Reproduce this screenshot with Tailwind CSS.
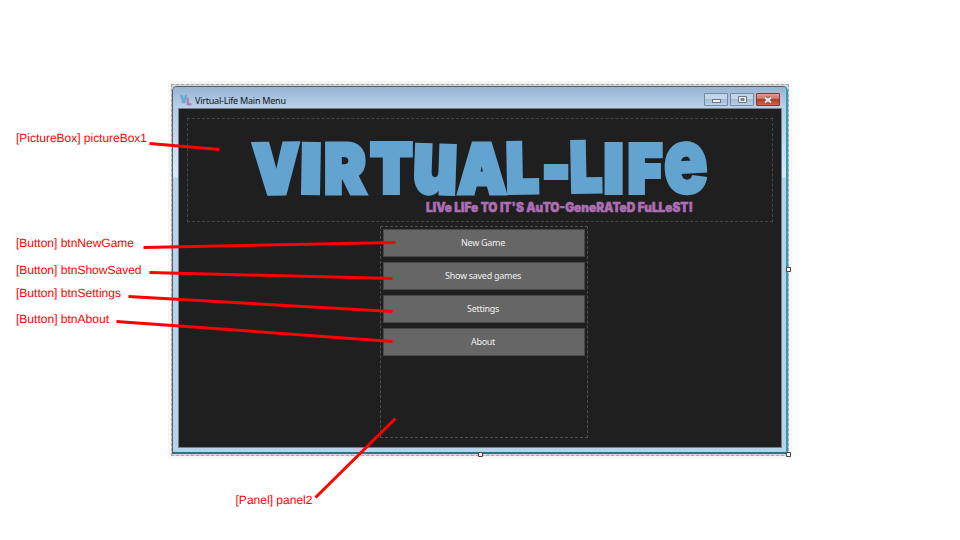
<!DOCTYPE html>
<html lang="en">
<head>
<meta charset="utf-8">
<title>Virtual-Life Main Menu</title>
<script src="https://cdn.jsdelivr.net/npm/@tailwindcss/browser@4"></script>
</head>
<body class="bg-white">
<main class="relative w-[960px] h-[540px] overflow-hidden bg-white">

  <!-- Designer surface around the form -->
  <div class="absolute left-[168px] top-[81px] w-[624px] h-[378px] bg-[#f6f6f6] p-[3px]">
    <div class="w-[618px] h-[372px] border border-dashed border-[#aaa] bg-[#d5d5d5] pt-px pb-px">
      <section class="w-[616px] h-[368px] flex flex-col rounded-t-[5px] border border-[#54616e] border-b-2 border-b-[#257783] border-r-2 border-r-[#2c9db9] bg-[linear-gradient(#9fbad7_0,#b4cce6_22px,#dce8f5_90px,#b9d1ea_91px)] px-[5px] pb-[4px]">
        <header class="h-[21px] flex items-center justify-between bg-[linear-gradient(#98b4d2,#bad1e9)] -mx-[5px] px-[6px] rounded-t-[4px] shrink-0">
          <div class="flex items-center gap-[2px] pl-[1px] pt-[5px]">
            <svg width="13" height="12" viewBox="0 0 13 12" font-family="Inter, sans-serif" font-weight="900"><text x="0" y="9" font-size="10" fill="#62a8d5" stroke="#62a8d5" stroke-width=".4" textLength="7" lengthAdjust="spacingAndGlyphs">V</text><text x="6.500" y="11" font-size="9" fill="#b277b8" stroke="#b277b8" stroke-width=".4" textLength="5" lengthAdjust="spacingAndGlyphs">L</text></svg>
            <svg width="94" height="14" viewBox="0 0 94 14"><text x="0" y="10.500" font-family="Noto Sans, sans-serif" font-size="9" fill="#10151c" textLength="91">Virtual-Life Main Menu</text></svg>
          </div>
          <div class="flex gap-[2px] pt-[4px]">
            <div class="w-[24px] h-[13px] rounded-[1px] border border-[#7489a1] bg-[linear-gradient(#c3d5e8_45%,#a4bcd6_50%,#b9d2eb)] flex items-center justify-center"><span class="w-[9px] h-[4px] mt-[2px] border border-[#6c7684] bg-[#eee]"></span></div>
            <div class="w-[24px] h-[13px] rounded-[1px] border border-[#7489a1] bg-[linear-gradient(#c3d5e8_45%,#a4bcd6_50%,#b9d2eb)] flex items-center justify-center"><svg width="9" height="7"><path d="M.5.5h8v6h-8z" fill="#f1f1f1" stroke="#6c7684"/><path d="M3 2.500h3v2H3z" fill="#8299b4" stroke="#6c7684"/></svg></div>
            <div class="w-[24px] h-[13px] rounded-[1px] border border-[#7c3c3b] bg-[linear-gradient(#dda092,#d0705d_45%,#b83b25_50%,#ce6448)] flex items-center justify-center"><svg width="10" height="8"><path d="M2 1.500l6 5m0-5l-6 5" stroke="#685b62" stroke-width="3.600"/><path d="M2 1.500l6 5m0-5l-6 5" stroke="#f5f0ee" stroke-width="1.800"/></svg></div>
          </div>
        </header>
        <div class="w-[604px] flex-1 min-h-0 flex flex-col bg-[#1f1f1f] border border-[#737f8d] px-[8px] pt-[9px]">
          <div class="w-[586px] h-[104px] shrink-0 border border-dashed border-[#484848]">
            <svg class="overflow-visible" width="583" height="102" viewBox="188 119 583 102" font-family="Inter, sans-serif" font-weight="900">
              <g fill="#62a3d0" stroke="#62a3d0" stroke-width="6" stroke-linejoin="miter" stroke-miterlimit="3">
                <text transform="translate(254 193) rotate(-1) scale(.86 1)" font-size="66">V</text>
                <text transform="translate(301 192) rotate(1) scale(1.01 1)" font-size="65">I</text>
                <text transform="translate(324.500 193) scale(.92 1)" font-size="67" stroke-width="5">R</text>
                <text transform="translate(371 192) scale(.9 1)" font-size="66">T</text>
                <text transform="translate(412 192) rotate(2) scale(.8 1)" font-size="86" stroke-width="5">u</text>
                <text transform="translate(458 193) scale(.9 1)" font-size="67" stroke-width="5">A</text>
                <text transform="translate(507 192) rotate(-1) scale(.84 1)" font-size="66">L</text>
                <text transform="translate(542.500 192) scale(.84 1)" font-size="68">-</text>
                <text transform="translate(571 191) rotate(-1) scale(.82 1)" font-size="66">L</text>
                <text transform="translate(604.500 192) scale(.96 1)" font-size="65">I</text>
                <text transform="translate(628.500 192) scale(.87 1)" font-size="65">F</text>
                <text transform="translate(665 194) rotate(-3) scale(.8 1)" font-size="91" stroke-width="3">e</text>
              </g>
              <text x="426" y="211.500" font-size="12.500" fill="#ae6db6" stroke="#ae6db6" stroke-width=".5" textLength="267" lengthAdjust="spacingAndGlyphs">LIVe LIFe TO IT'S AuTO-GeneRATeD FuLLeST!</text>
            </svg>
          </div>
          <div class="mt-[4px] ml-[193px] w-[208px] h-[212px] shrink-0 border border-dashed border-[#505050] px-[2px] pt-[2px] flex flex-col gap-[5px] font-['Noto_Sans',sans-serif] text-[9px] tracking-[-0.28px] text-[#eee]">
            <button class="h-[28px] border border-[#484848] bg-[#666] pr-[2px]">New Game</button>
            <button class="h-[28px] border border-[#484848] bg-[#666] pr-[2px]">Show saved games</button>
            <button class="h-[28px] border border-[#484848] bg-[#666] pr-[2px]">Settings</button>
            <button class="h-[28px] border border-[#484848] bg-[#666] pr-[2px]">About</button>
          </div>
        </div>
      </section>
    </div>
  </div>

  <!-- Resize handles and annotation callouts -->
  <svg class="absolute inset-0" width="960" height="540" viewBox="0 0 960 540">
    <g fill="#fff" stroke="#444" stroke-width="1"><path d="M786.500 267.500h4v4h-4zM478.500 452.500h4v4h-4zM786.500 452.500h4v4h-4z"/></g>
    <g stroke="#f00" stroke-width="3" fill="none"><path d="M149.500 143.500L219.500 149.500M143.500 247.500L395.500 242.500M149.500 272.500L392.500 278.500M128.500 296.500L392.500 311.500M116.500 321.500L392.500 341.500M315.500 497.500L395.500 418.500"/></g>
    <g font-family="Liberation Sans, Arial, sans-serif" font-size="12" fill="#f00" text-rendering="geometricPrecision">
      <text x="16" y="141.500" textLength="131" lengthAdjust="spacingAndGlyphs">[PictureBox] pictureBox1</text>
      <text x="16" y="247" textLength="118" lengthAdjust="spacingAndGlyphs">[Button] btnNewGame</text>
      <text x="16" y="273.500" textLength="125.500" lengthAdjust="spacingAndGlyphs">[Button] btnShowSaved</text>
      <text x="16" y="296.500" textLength="105" lengthAdjust="spacingAndGlyphs">[Button] btnSettings</text>
      <text x="16" y="322.500" textLength="93" lengthAdjust="spacingAndGlyphs">[Button] btnAbout</text>
      <text x="235.500" y="503.500" textLength="77" lengthAdjust="spacingAndGlyphs">[Panel] panel2</text>
    </g>
  </svg>
</main>
</body>
</html>
